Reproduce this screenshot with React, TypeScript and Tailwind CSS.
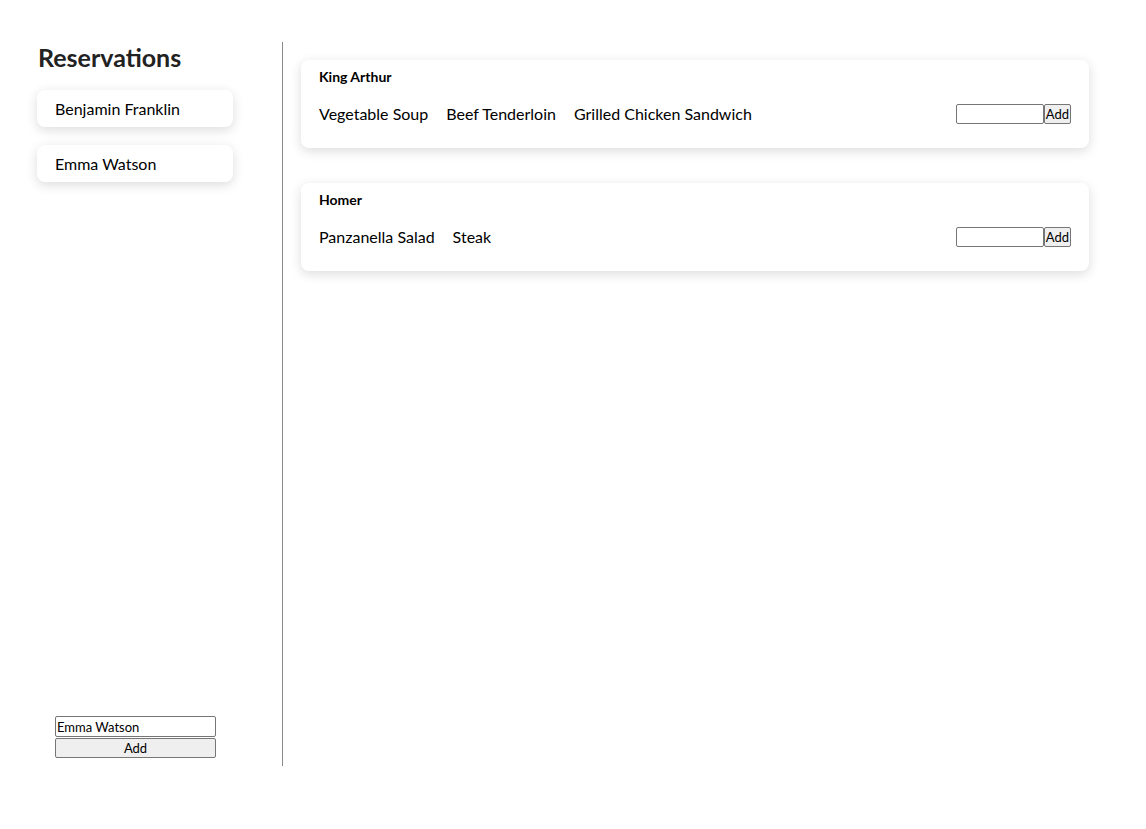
const font = { fontFamily: '"Gill Sans", Lato, "Liberation Sans", sans-serif' };

const reservations = ["Benjamin Franklin", "Emma Watson"];
const customers = [
  { name: "King Arthur", foods: ["Vegetable Soup", "Beef Tenderloin", "Grilled Chicken Sandwich"] },
  { name: "Homer", foods: ["Panzanella Salad", "Steak"] },
];

export default function App() {
  return (
    <div className="flex h-[829px] bg-white text-black" style={font}>
      <div className="mt-[42px] mb-[63px] w-[283px] shrink-0 border-r border-[#8a8a8a] flex flex-col">
        <h1 className="pl-[38px] -mt-[1px] text-[25px] font-bold leading-[32px] text-[#222]">Reservations</h1>
        <div className="flex flex-col gap-[18px] pl-[37px] mt-[17px]">
          {reservations.map((r) => (
            <div key={r} className="w-[196px] h-[37px] rounded-lg bg-white shadow-[0_3px_12px_rgba(0,0,0,0.14)] pl-[18px] flex items-center text-[16px]">
              {r}
            </div>
          ))}
        </div>
        <div className="mt-auto ml-[55px] mb-[8px] w-[161px] flex flex-col gap-[1px]">
          <input defaultValue="Emma Watson" className="h-[21px] border border-[#767676] rounded-[2px] px-[1px] text-[13px]" />
          <button className="h-[20px] border border-[#767676] rounded-[2px] bg-[#efefef] text-[13px]">Add</button>
        </div>
      </div>
      <div className="flex-1 pl-[18px] pt-[60px] pr-[57px] flex flex-col gap-[35px]">
        {customers.map((c) => (
          <div key={c.name} className="h-[88px] rounded-lg bg-white shadow-[0_3px_12px_rgba(0,0,0,0.14)] px-[18px] pt-[8px] flex flex-col">
            <div className="text-[14px] font-bold leading-[18px]">{c.name}</div>
            <div className="flex items-center mt-[16px]">
              <div className="flex gap-[18px] text-[16px]">
                {c.foods.map((f) => <span key={f}>{f}</span>)}
              </div>
              <div className="ml-auto flex">
                <input className="w-[88px] h-[20px] border border-[#767676] rounded-[2px]" />
                <button className="h-[20px] px-[1px] border border-[#767676] rounded-[2px] bg-[#efefef] text-[13px] leading-none">Add</button>
              </div>
            </div>
          </div>
        ))}
      </div>
    </div>
  );
}
